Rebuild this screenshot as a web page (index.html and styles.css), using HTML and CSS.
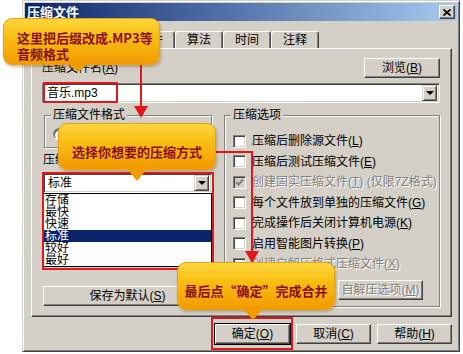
FILE: index.html
```html
<!DOCTYPE html>
<html lang="zh-CN">
<head>
    <meta charset="UTF-8">
    <meta name="viewport" content="width=device-width, initial-scale=1.0">
    <title>压缩文件</title>
    <link rel="stylesheet" href="styles.css">
</head>
<body>
<div class="stage">
    <div class="dialog">
        <div class="titlebar">
            <span class="title">压缩文件</span>
            <span class="close-btn">
                <svg width="8" height="7" viewBox="0 0 8 7"><path d="M0.5 0.5 L7.5 6.5 M7.5 0.5 L0.5 6.5" stroke="#000" stroke-width="1.7"/></svg>
            </span>
        </div>

        <div class="tabs">
            <span class="tab active">常规</span>
            <span class="tab">高级</span>
            <span class="tab">文件</span>
            <span class="tab">算法</span>
            <span class="tab">时间</span>
            <span class="tab">注释</span>
        </div>

        <div class="panel">
            <div class="name-row">
                <span class="label">压缩文件名(<u>A</u>)</span>
                <button type="button" class="btn browse">浏览(<u>B</u>)</button>
            </div>
            <div class="combo">
                <span class="combo-text">音乐.mp3</span>
                <span class="drop-btn"></span>
            </div>

            <div class="columns">
                <div class="col-left">
                    <fieldset class="group format">
                        <legend>压缩文件格式</legend>
                        <div class="radio-row">
                            <span class="radio checked"></span><span>RAR</span>
                            <span class="radio"></span><span>ZIP</span>
                        </div>
                    </fieldset>

                    <div class="method-label">压缩方式(<u>C</u>)</div>
                    <div class="select">
                        <span class="select-text">标准</span>
                        <span class="drop-btn"></span>
                    </div>
                    <ul class="listbox">
                        <li>存储</li>
                        <li>最快</li>
                        <li>快速</li>
                        <li class="selected">标准</li>
                        <li>较好</li>
                        <li>最好</li>
                    </ul>

                    <button type="button" class="btn save">保存为默认(<u>S</u>)</button>
                </div>

                <fieldset class="group options">
                    <legend>压缩选项</legend>
                    <div class="check-row"><span class="checkbox"></span><span>压缩后删除源文件(<u>L</u>)</span></div>
                    <div class="check-row"><span class="checkbox"></span><span>压缩后测试压缩文件(<u>E</u>)</span></div>
                    <div class="check-row disabled">
                        <span class="checkbox checked">
                            <svg width="9" height="9" viewBox="0 0 9 9"><path d="M1 4 L3.5 6.5 L8 1.5" fill="none" stroke="#808080" stroke-width="2"/></svg>
                        </span>
                        <span>创建固实压缩文件(<u>T</u>) (仅限7Z格式)</span>
                    </div>
                    <div class="check-row"><span class="checkbox"></span><span>每个文件放到单独的压缩文件(<u>G</u>)</span></div>
                    <div class="check-row"><span class="checkbox"></span><span>完成操作后关闭计算机电源(<u>K</u>)</span></div>
                    <div class="check-row"><span class="checkbox"></span><span>启用智能图片转换(<u>P</u>)</span></div>
                    <div class="check-row disabled"><span class="checkbox"></span><span>创建自解压格式压缩文件(<u>X</u>)</span></div>
                    <button type="button" class="btn sfx" disabled>自解压选项(<u>M</u>)</button>
                </fieldset>
            </div>
        </div>

        <div class="actions">
            <button type="button" class="btn default">确定(<u>O</u>)</button>
            <button type="button" class="btn">取消(<u>C</u>)</button>
            <button type="button" class="btn">帮助(<u>H</u>)</button>
        </div>
    </div>

    <!-- red marks of the tutorial -->
    <svg class="marks" width="463" height="354" viewBox="0 0 463 354">
        <g fill="none" stroke="#e3161b" stroke-width="2">
            <rect x="44" y="83" width="73" height="19"/>
            <rect x="43" y="173" width="170" height="96"/>
            <rect x="212" y="318" width="80" height="31"/>
            <path d="M141 62 V107"/>
            <path d="M214 152 H252 V253"/>
        </g>
        <g fill="#e3161b">
            <polygon points="134,106 148,106 141,118"/>
            <polygon points="245,251 259,251 252,263"/>
        </g>
    </svg>

    <div class="callout callout-name">这里把后缀改成.MP3等<br>音频格式</div>
    <div class="callout callout-method">选择你想要的压缩方式</div>
    <div class="callout callout-ok">最后点“确定”完成合并</div>
</div>
</body>
</html>
```

FILE: styles.css
```css
* {
    box-sizing: border-box;
}

body {
    margin: 0;
    background-color: #fff;
    font-family: "Liberation Sans", "Noto Sans CJK SC", sans-serif;
    font-size: 12px;
    color: #000;
}

.stage {
    position: relative;
    width: 463px;
    height: 354px;
    overflow: hidden;
}

/* window */
.dialog {
    margin-left: 22px;
    width: 438px;
    height: 352px;
    padding: 2px;
    background-color: #d4d0c8;
    border: 1px solid;
    border-color: #d4d0c8 #404040 #404040 #d4d0c8;
    box-shadow: inset 1px 1px #fff, inset -1px -1px #808080;
    display: flex;
    flex-direction: column;
}

.titlebar {
    height: 18px;
    padding: 0 2px;
    background: linear-gradient(to right, #0a246a, #a6caf0);
    display: flex;
    justify-content: space-between;
    align-items: center;
}

.title {
    color: #fff;
    font-family: "Noto Sans CJK SC", sans-serif;
    font-weight: bold;
    font-size: 13px;
    line-height: 14px;
}

.close-btn {
    width: 16px;
    height: 14px;
    background-color: #d4d0c8;
    border: 1px solid;
    border-color: #fff #404040 #404040 #fff;
    box-shadow: inset -1px -1px #808080;
    display: flex;
    justify-content: center;
    align-items: center;
}

/* tabs */
.tabs {
    margin: 8px 0 0 6px;
    height: 19px;
    display: flex;
    align-items: flex-end;
}

.tab {
    width: 48px;
    height: 17px;
    border: 1px solid;
    border-bottom: none;
    border-color: #fff #404040 transparent #fff;
    border-radius: 3px 3px 0 0;
    box-shadow: inset -1px 0 #808080;
    text-align: center;
    line-height: 16px;
}

.tab.active {
    height: 20px;
    margin-bottom: -1px;
    background-color: #d4d0c8;
    position: relative;
    z-index: 1;
}

/* page of the tab */
.panel {
    margin-left: 6px;
    width: 421px;
    height: 269px;
    padding: 9px 11px 0 10px;
    border: 1px solid;
    border-color: #fff #404040 #404040 #fff;
    box-shadow: inset -1px -1px #808080;
}

.name-row {
    height: 20px;
    display: flex;
    justify-content: space-between;
    align-items: center;
}

.label {
    line-height: 14px;
}

.btn {
    height: 20px;
    padding: 0;
    border: 1px solid;
    border-color: #fff #404040 #404040 #fff;
    box-shadow: inset -1px -1px #808080;
    background-color: #d4d0c8;
    font-family: inherit;
    font-size: 12px;
    line-height: 16px;
    color: #000;
    text-align: center;
}

.btn[disabled] {
    color: #808080;
    text-shadow: 1px 1px #fff;
}

.browse {
    width: 76px;
}

.combo,
.select {
    height: 20px;
    background-color: #fff;
    border: 1px solid;
    border-color: #808080 #fff #fff #808080;
    box-shadow: inset 1px 1px #404040, inset -1px -1px #d4d0c8;
    padding: 2px 2px 2px 4px;
    display: flex;
    justify-content: space-between;
    align-items: center;
}

.combo {
    margin-top: 5px;
}

.combo-text,
.select-text {
    line-height: 14px;
}

.drop-btn {
    width: 15px;
    height: 16px;
    background-color: #d4d0c8;
    border: 1px solid;
    border-color: #d4d0c8 #404040 #404040 #d4d0c8;
    box-shadow: inset 1px 1px #fff, inset -1px -1px #808080;
    display: flex;
    justify-content: center;
    align-items: center;
}

.drop-btn::before {
    content: "";
    border-left: 4px solid transparent;
    border-right: 4px solid transparent;
    border-top: 4px solid #000;
}

.columns {
    margin-top: 6px;
    display: flex;
    gap: 12px;
}

.col-left {
    margin-left: 1px;
    width: 169px;
    display: flex;
    flex-direction: column;
}

/* group boxes */
.group {
    margin: 0;
    padding: 0 8px;
    min-inline-size: 0;
    border: 1px solid #808080;
    box-shadow: inset 1px 1px #fff, 1px 1px #fff;
}

.group legend {
    margin-left: -2px;
    padding: 0 2px;
    line-height: 12px;
    background-color: #d4d0c8;
}

.format {
    margin-left: 1px;
    height: 39px;
}

.radio-row {
    margin-top: 6px;
    height: 14px;
    display: flex;
    align-items: center;
    gap: 4px;
    line-height: 14px;
}

.radio {
    width: 12px;
    height: 12px;
    border-radius: 50%;
    background-color: #fff;
    border: 1px solid;
    border-color: #808080 #fff #fff #808080;
    box-shadow: inset 1px 1px #404040;
}

.radio + span {
    margin-right: 30px;
}

.method-label {
    margin-top: 5px;
    line-height: 14px;
}

.select {
    margin-top: 6px;
}

.listbox {
    margin: 0;
    padding: 0;
    list-style: none;
    height: 74px;
    background-color: #fff;
    border: 1px solid #000;
}

.listbox li {
    height: 12px;
    line-height: 12px;
    padding-left: 1px;
}

.listbox li.selected {
    background-color: #0a246a;
    color: #fff;
}

.save {
    margin-top: 19px;
    width: 169px;
}

.options {
    width: 216px;
    height: 198px;
    padding-top: 10px;
    display: flex;
    flex-direction: column;
}

.check-row {
    height: 20.5px;
    display: flex;
    align-items: center;
    gap: 6px;
    line-height: 14px;
    white-space: nowrap;
}

.check-row.disabled {
    color: #808080;
    text-shadow: 1px 1px #fff;
}

.checkbox {
    width: 13px;
    height: 13px;
    flex-shrink: 0;
    background-color: #fff;
    border: 1px solid;
    border-color: #808080 #fff #fff #808080;
    box-shadow: inset 1px 1px #404040, inset -1px -1px #d4d0c8;
    display: flex;
    justify-content: center;
    align-items: center;
}

.checkbox.checked {
    background-color: #d4d0c8;
}

.sfx {
    margin: 5px 8px 0 0;
    align-self: flex-end;
    width: 85px;
}

/* bottom buttons */
.actions {
    margin-top: 7px;
    padding-right: 5px;
    display: flex;
    justify-content: flex-end;
    gap: 6px;
}

.actions .btn {
    width: 75px;
}

.actions .default {
    outline: 1px solid #000;
}

/* tutorial marks */
.marks {
    position: absolute;
    left: 0;
    top: 0;
    z-index: 2;
}

.callout {
    position: absolute;
    z-index: 3;
    border-radius: 9px;
    background: linear-gradient(to bottom, #fdd63e 0%, #f8be12 40%, #f29a02 100%);
    border: 1px solid #e8a018;
    box-shadow: 1px 2px 3px rgba(120, 70, 0, 0.35);
    color: #8a1010;
    font-family: "Noto Sans CJK SC", sans-serif;
    font-weight: bold;
    font-size: 13px;
    line-height: 16px;
}

.callout::after {
    content: "";
    position: absolute;
    top: 100%;
    border-left: 10px solid transparent;
    border-right: 10px solid transparent;
    border-top: 8px solid #f29a02;
}

.callout-name {
    left: 3px;
    top: 18px;
    width: 157px;
    height: 47px;
    padding: 11px 0 0 13px;
}

.callout-name::after {
    left: 64px;
}

.callout-method {
    left: 58px;
    top: 123px;
    width: 158px;
    height: 47px;
    padding-top: 20px;
    text-align: center;
}

.callout-method::after {
    left: 68px;
    border-top-width: 12px;
}

.callout-ok {
    left: 177px;
    top: 262px;
    width: 158px;
    height: 48px;
    padding-top: 20px;
    text-align: center;
}

.callout-ok::after {
    left: 65px;
    border-top-width: 11px;
}
```
